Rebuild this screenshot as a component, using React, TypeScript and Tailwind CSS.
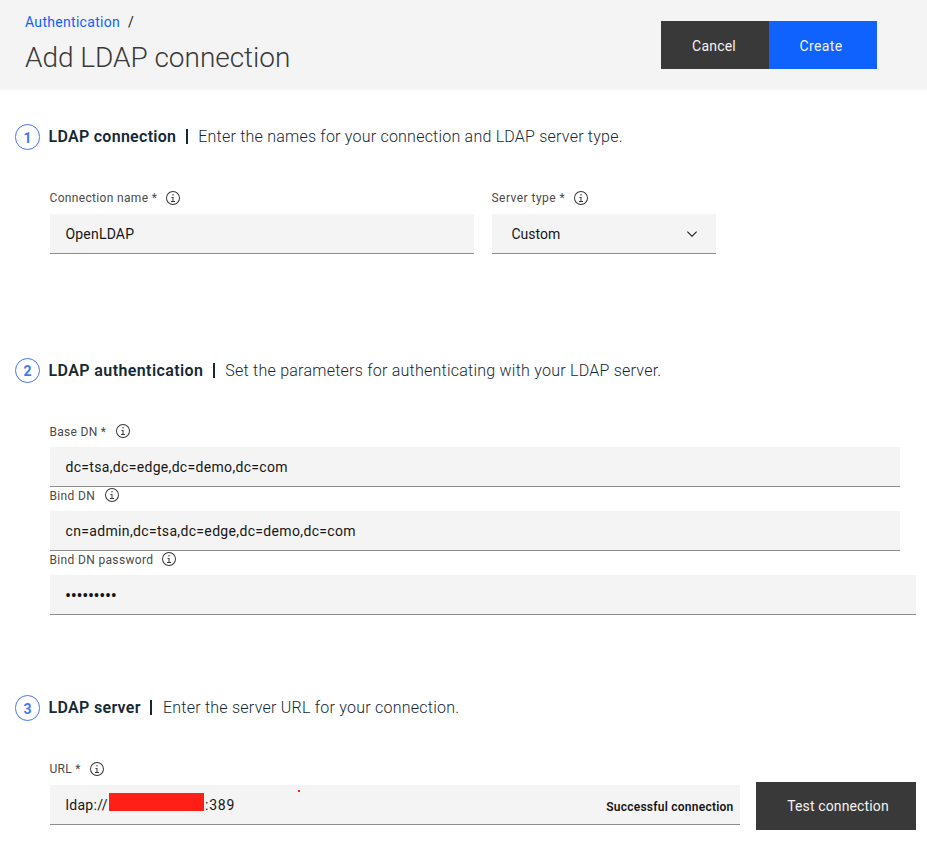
import type { ReactNode } from "react";

function InfoIcon() {
  return (
    <svg className="size-4 shrink-0" viewBox="0 0 32 32" fill="#393939">
      <path d="M17 22V14H13v2h2v6H12v2h8V22zM16 8a1.5 1.5 0 1 0 1.5 1.5A1.5 1.5 0 0 0 16 8z" />
      <path d="M16 30A14 14 0 1 1 30 16 14 14 0 0 1 16 30zM16 4A12 12 0 1 0 28 16 12 12 0 0 0 16 4z" />
    </svg>
  );
}

function ChevronIcon() {
  return (
    <svg className="size-4 shrink-0" viewBox="0 0 16 16" fill="#161616">
      <path d="M8 11L3 6 3.7 5.3 8 9.6 12.3 5.3 13 6z" />
    </svg>
  );
}

function SectionHeading({ step, badge, title, children }: { step: number; badge: string; title: ReactNode; children: ReactNode }) {
  return (
    <div className="flex h-[26px] items-start whitespace-nowrap pl-[15px] text-base leading-[26px] text-[#152935]">
      <span className={`mr-[8.5px] flex w-[25px] shrink-0 items-center justify-center rounded-full border border-[#4376f5] text-sm font-bold text-[#4376f5] ${badge}`}>
        {step}
      </span>
      <span className="font-semibold">{title}</span>
      <span className="ml-[9.5px] mr-[10.5px] mt-[5px] h-[15px] w-0.5 bg-[#152935]" />
      <span className="font-light">{children}</span>
    </div>
  );
}

function Label({ className, children }: { className: string; children: ReactNode }) {
  return (
    <div className="-ml-[0.5px] flex h-4 items-center whitespace-nowrap text-xs leading-4 text-[#4a4a4a]">
      <span className={className}>{children}</span>
      <InfoIcon />
    </div>
  );
}

const field = "flex h-10 items-center whitespace-nowrap border-b border-[#8d8d8d] bg-[#f4f4f4] pl-[15.5px] text-sm text-[#161616]";

export default function App() {
  return (
    <div className="h-[842px] w-[927px] overflow-hidden bg-white font-['Roboto',sans-serif]">
      <header className="flex h-[90px] justify-between bg-[#f4f4f4] pl-[25px] pr-[50px]">
        <div className="pt-3">
          <div className="flex h-5 items-center gap-2 text-sm">
            <a className="tracking-[0.3px] text-[#0f62fe]">Authentication</a>
            <span className="text-[#161616]">/</span>
          </div>
          <h1 className="mt-2 text-[28px] font-light leading-9 tracking-[-0.04px] text-[#393939]">
            Add LDAP connection
          </h1>
        </div>
        <div className="mt-[21px] flex h-12 text-sm text-[#f3f3f3]">
          <button className="w-[108px] bg-[#393939] pr-0.5 pt-0.5 tracking-[0.2px]">Cancel</button>
          <button className="w-[108px] bg-[#0f62fe] pr-1 pt-0.5 tracking-[0.35px]">Create</button>
        </div>
      </header>

      <section className="h-[234px] pt-[34px]">
        <SectionHeading step={1} badge="h-[26px] pt-0.5" title={<span className="tracking-[0.28px]">LDAP connection</span>}>
          <span className="tracking-[0.22px]">Enter the names for your connection and LDAP server type.</span>
        </SectionHeading>
        <div className="mt-10 flex gap-[18px] pl-[50px]">
          <div className="w-[424px]">
            <Label className="mr-2 tracking-[0.33px]">Connection name *</Label>
            <div className={`${field} mt-2`}>
              <span className="tracking-[0.19px]">OpenLDAP</span>
            </div>
          </div>
          <div className="w-[224px]">
            <Label className="mr-2 tracking-[0.46px]">Server type *</Label>
            <div className={`${field} mt-2 justify-between pr-4`}>
              <span className="ml-1">Custom</span>
              <ChevronIcon />
            </div>
          </div>
        </div>
      </section>

      <section className="h-[337px] pt-[34px]">
        <SectionHeading step={2} badge="h-[25px]" title={<span className="tracking-[0.4px]">LDAP authentication</span>}>
          <span className="tracking-[0.24px]">Set the parameters for authenticating with your LDAP server.</span>
        </SectionHeading>
        <div className="mt-[39px] pl-[50px]">
          <Label className="mr-[9px] pt-px tracking-[0.3px]">Base DN *</Label>
          <div className={`${field} mt-2 w-[850px]`}>
            <span className="tracking-[0.32px]">dc=tsa,dc=edge,dc=demo,dc=com</span>
          </div>
          <Label className="mr-[9px] pt-px tracking-[0.35px]">Bind DN</Label>
          <div className={`${field} mt-2 w-[850px]`}>
            <span className="tracking-[0.34px]">cn=admin,dc=tsa,dc=edge,dc=demo,dc=com</span>
          </div>
          <Label className="mr-2 pt-px tracking-[0.34px]">Bind DN password</Label>
          <div className={`${field} mt-2 w-[866px]`}>
            <span className="-ml-[0.5px] pt-0.5 text-lg tracking-[-0.35px]">•••••••••</span>
          </div>
        </div>
      </section>

      <section className="pt-[34px]">
        <SectionHeading step={3} badge="h-[26px] pt-0.5" title={<span className="tracking-[0.32px]">LDAP server</span>}>
          <span className="tracking-[0.24px]">Enter the server URL for your connection.</span>
        </SectionHeading>
        <div className="mt-10 flex items-end pl-[50px]">
          <div className="w-[690px]">
            <Label className="mr-2 tracking-[0.3px]">URL *</Label>
            <div className={`${field} relative mt-2`}>
              <span className="w-[43.5px] tracking-[0.3px]">ldap://<span className="ml-px">:</span></span>
              <span className="z-10 mb-[5px] h-[18px] w-[95px] bg-[#ff1f17]" />
              <span className="ml-px tracking-[0.8px]">:389</span>
              <span className="absolute left-[248px] top-[5px] size-0.5 bg-[#ff1f17]" />
              <span className="ml-auto mr-[6.5px] pt-1 text-xs font-semibold tracking-[0.24px]">Successful connection</span>
            </div>
          </div>
          <button className="-mb-[5px] ml-4 h-12 w-40 bg-[#393939] pl-1 text-sm tracking-[0.14px] text-[#f3f3f3]">
            Test connection
          </button>
        </div>
      </section>
    </div>
  );
}
